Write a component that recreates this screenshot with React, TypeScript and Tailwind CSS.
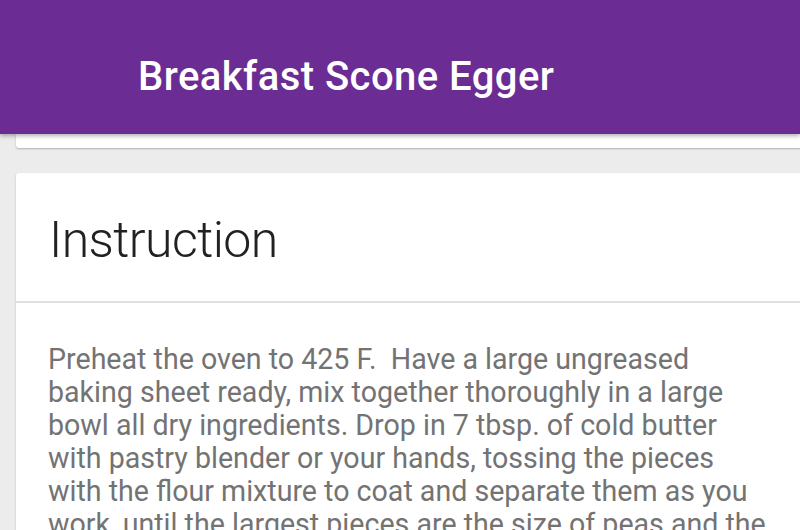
import React from "react";

const LINES = [
  "Preheat the oven to 425 F.\u00a0 Have a large ungreased",
  "baking sheet ready, mix together thoroughly in a large",
  "bowl all dry ingredients. Drop in 7 tbsp. of cold butter",
  "with pastry blender or your hands, tossing the pieces",
  "with the flour mixture to coat and separate them as you",
  "work, until the largest pieces are the size of peas and the",
  "rest resemble coarse crumbs.",
];

export default function App() {
  return (
    <div
      className="relative h-[530px] w-[800px] overflow-hidden bg-[#ececec]"
      style={{ fontFamily: "Roboto, 'Liberation Sans', sans-serif" }}
    >
      {/* App bar */}
      <header className="relative z-10 flex h-[134px] items-center bg-[#6b2c94] pl-[138px] shadow-[0_2px_4px_rgba(0,0,0,0.3)]">
        <h1 className="pt-[20px] text-[40px] font-medium tracking-[0.45px] text-white">
          Breakfast Scone Egger
        </h1>
      </header>

      {/* Previous card tail */}
      <div className="ml-[16px] h-[14px] w-[800px] rounded-b-[3px] bg-white shadow-[0_1px_2px_rgba(0,0,0,0.25)]" />

      {/* Instruction card */}
      <div className="ml-[16px] mt-[25px] w-[800px] rounded-[3px] bg-white shadow-[0_1px_2px_rgba(0,0,0,0.25)]">
        <div className="flex h-[130px] items-center border-b-2 border-[#e0e0e0] pl-[33px] pt-[6px]">
          <h2 className="text-[50px] font-light tracking-[-0.6px] text-[#212121]">Instruction</h2>
        </div>
        <div className="pl-[32px] pt-[40px] text-[28.6px] leading-[33px] text-[#737373]">
          {LINES.map((line, i) => (
            <p key={i} className="whitespace-nowrap">
              {line}
            </p>
          ))}
        </div>
      </div>
    </div>
  );
}
